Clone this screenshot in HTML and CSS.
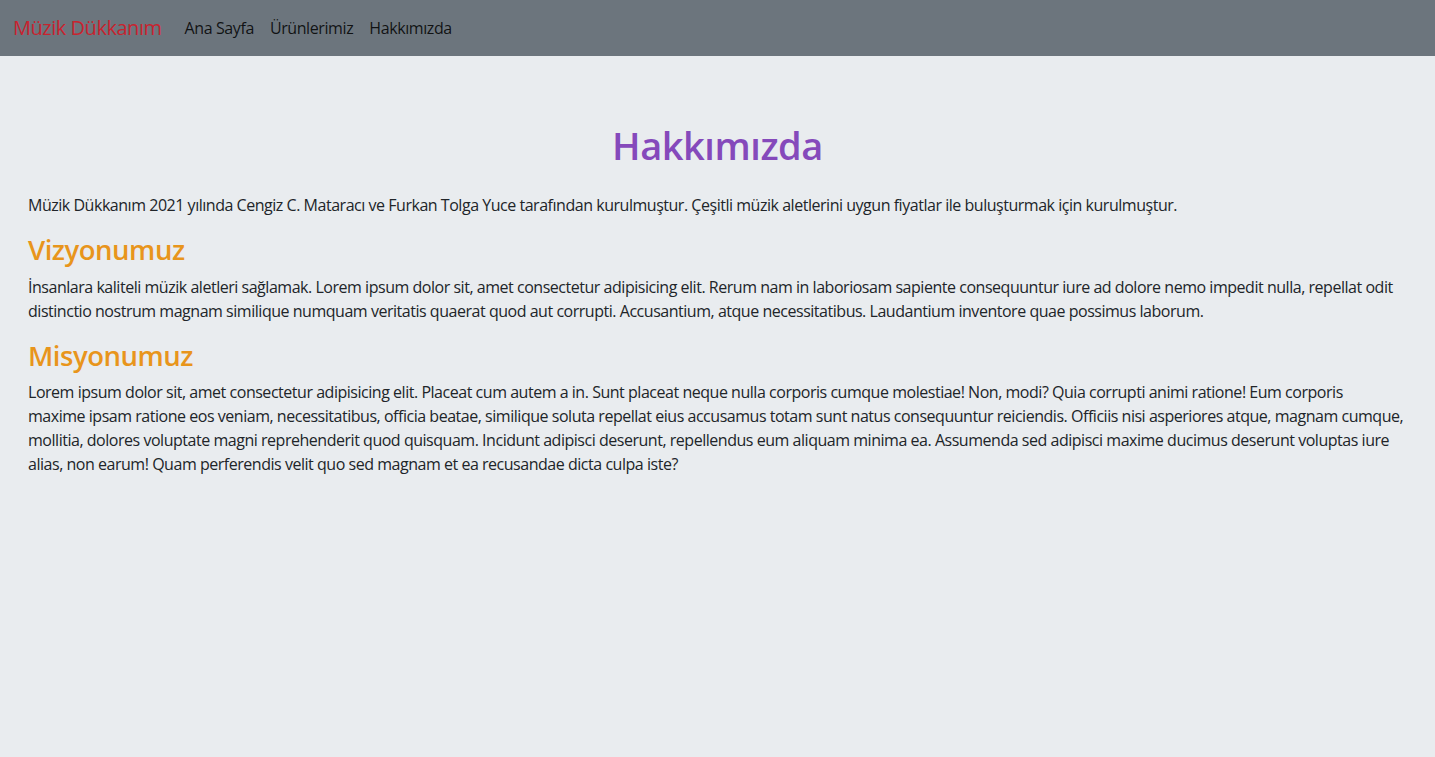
FILE: index.html
```html
<!DOCTYPE html>
<html lang="tr">
<head>
<meta charset="utf-8">
<title>Hakkımızda</title>
<link rel="stylesheet" href="styles.css">
</head>
<body>
<nav class="navbar">
  <a class="brand" href="#">Müzik Dükkanım</a>
  <ul class="nav">
    <li><a class="nav-link" href="#">Ana Sayfa</a></li>
    <li><a class="nav-link" href="#">Ürünlerimiz</a></li>
    <li><a class="nav-link" href="#">Hakkımızda</a></li>
  </ul>
</nav>
<main class="content">
  <h1 class="title">Hakkımızda</h1>
  <p>Müzik Dükkanım 2021 yılında Cengiz C. Mataracı ve Furkan Tolga Yuce tarafından kurulmuştur. Çeşitli müzik aletlerini uygun fiyatlar ile buluşturmak için kurulmuştur.</p>
  <h3 class="section">Vizyonumuz</h3>
  <p>İnsanlara kaliteli müzik aletleri sağlamak. Lorem ipsum dolor sit, amet consectetur adipisicing elit. Rerum nam in laboriosam sapiente consequuntur iure ad dolore nemo impedit nulla, repellat odit distinctio nostrum magnam similique numquam veritatis quaerat quod aut corrupti. Accusantium, atque necessitatibus. Laudantium inventore quae possimus laborum.</p>
  <h3 class="section">Misyonumuz</h3>
  <p>Lorem ipsum dolor sit, amet consectetur adipisicing elit. Placeat cum autem a in. Sunt placeat neque nulla corporis cumque molestiae! Non, modi? Quia corrupti animi ratione! Eum corporis<br>maxime ipsam ratione eos veniam, necessitatibus, officia beatae, similique soluta repellat eius accusamus totam sunt natus consequuntur reiciendis. Officiis nisi asperiores atque, magnam cumque,<br>mollitia, dolores voluptate magni reprehenderit quod quisquam. Incidunt adipisci deserunt, repellendus eum aliquam minima ea. Assumenda sed adipisci maxime ducimus deserunt voluptas iure<br>alias, non earum! Quam perferendis velit quo sed magnam et ea recusandae dicta culpa iste?</p>
</main>
</body>
</html>
```
FILE: styles.css
```css
* { box-sizing: border-box; }
html, body { margin: 0; padding: 0; }
body {
  background: #e9ecef;
  color: #212529;
  font-family: "Open Sans", "Noto Sans", sans-serif;
  font-size: 16px;
  line-height: 24px;
  letter-spacing: -0.47px;
}
.navbar {
  display: flex;
  align-items: center;
  height: 56px;
  padding: 0 12px 0 13px;
  background: #6c757d;
}
.brand {
  color: #c8232f;
  font-size: 20px;
  line-height: 30px;
  text-decoration: none;
  margin-right: 15px;
}
.nav {
  display: flex;
  list-style: none;
  margin: 0;
  padding: 0;
}
.nav-link {
  display: block;
  padding: 8px 8px;
  color: rgba(0, 0, 0, 0.85);
  text-decoration: none;
  font-size: 16px;
  letter-spacing: -0.4px;
}
.content {
  padding: 0 28px;
}
.title {
  margin: 65px 0 24px;
  text-align: center;
  color: #8549bb;
  font-size: 38px;
  line-height: 48px;
  font-weight: 600;
}
p {
  margin: 0 0 16px;
}
.section {
  margin: 0 0 8px;
  color: #e8951c;
  font-size: 27.5px;
  line-height: 33.6px;
  font-weight: 600;
}
```
